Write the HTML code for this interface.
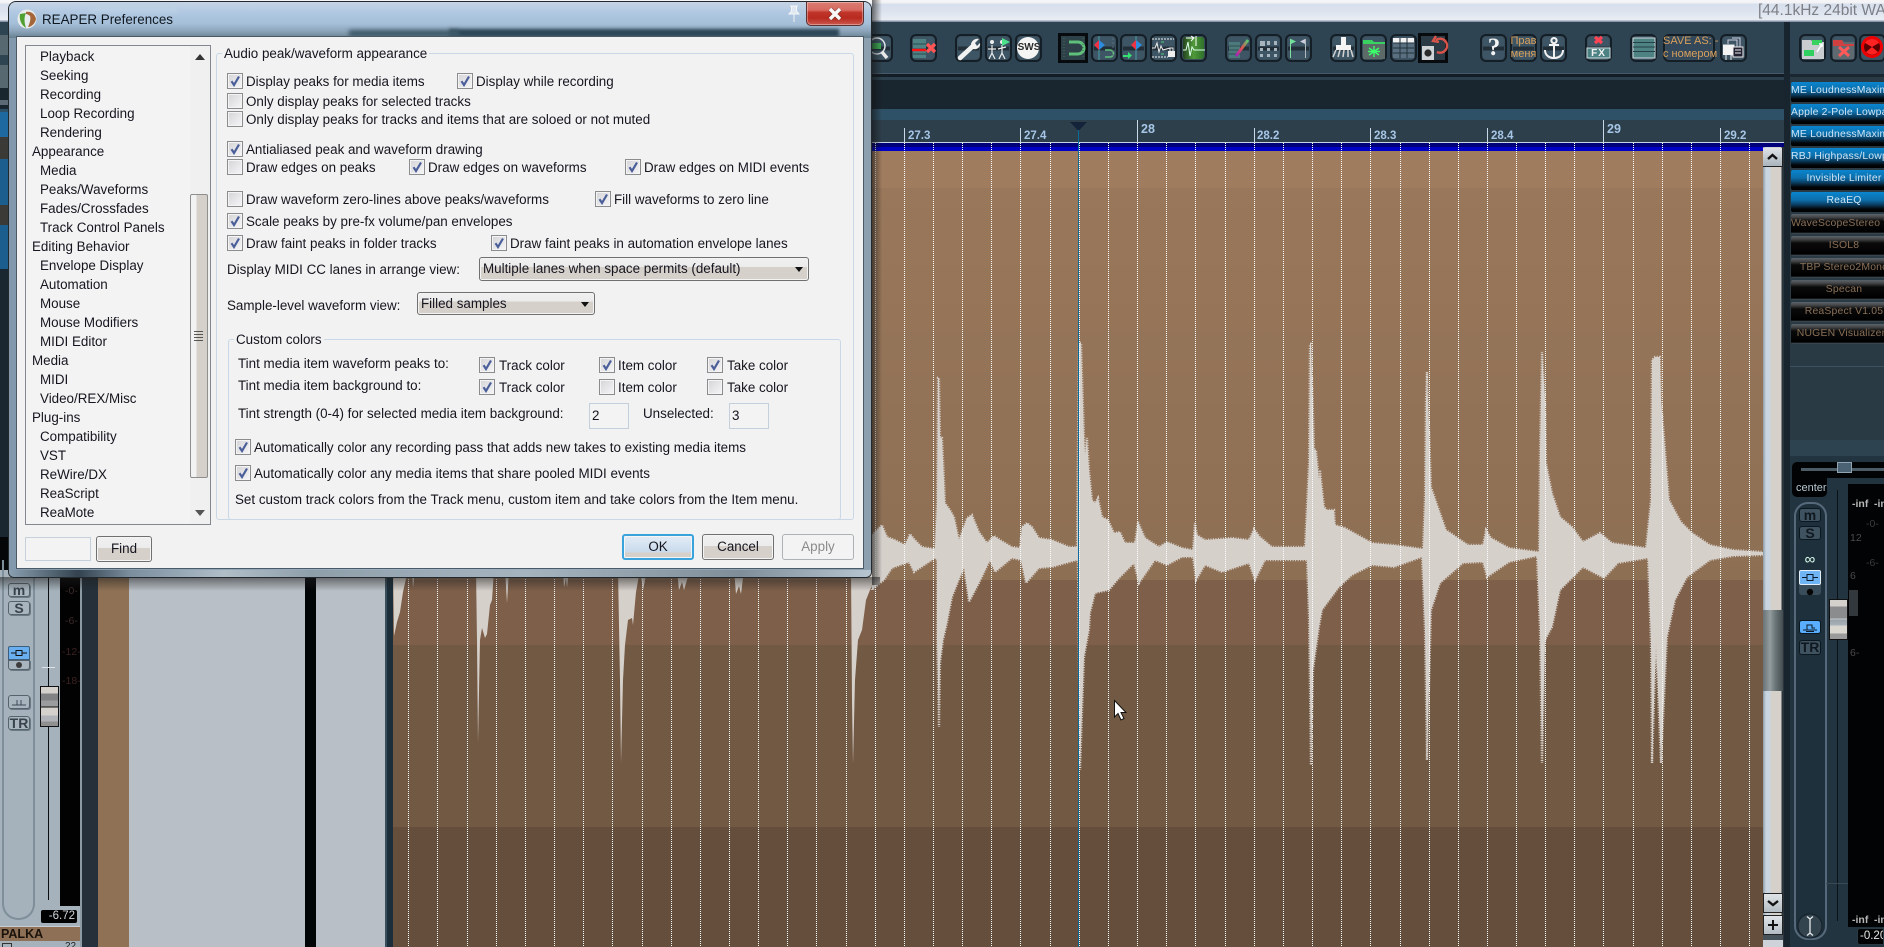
<!DOCTYPE html>
<html><head><meta charset="utf-8"><title>REAPER Preferences</title>
<style>
html,body{margin:0;padding:0;width:1884px;height:947px;overflow:hidden;background:#1a2731}
*{box-sizing:border-box}
body{position:relative;font-family:"Liberation Sans","Noto Sans CJK JP",sans-serif;font-size:13.4px;color:#15151f}
.a{position:absolute}
.t{position:absolute;white-space:nowrap;line-height:16px;height:16px;margin-top:1px}
.cb{position:absolute;width:16px;height:16px;border:1px solid #8a8c8e;background:linear-gradient(135deg,#d4d4d6,#f6f6f8);box-shadow:inset 0 0 0 1px #f4f4f4}
.cb svg{position:absolute;left:1px;top:1px;width:12px;height:12px}
.btn{position:absolute;border:1px solid #707070;border-radius:3px;background:linear-gradient(#f0f0f0 0,#ececec 45%,#d6d0cb 45%,#d6d0cb 100%);text-align:center;line-height:24px;box-shadow:inset 0 0 0 1px #f5f5f5}
.combo{position:absolute;border:1px solid #707070;border-radius:3px;background:linear-gradient(#f0f0f0 0,#ececec 40%,#d6d0cb 40%,#d6d0cb 100%);line-height:22px;padding-left:3px;box-shadow:inset 0 0 0 1px #f3f3f3}
.combo i{position:absolute;right:5px;top:9px;width:0;height:0;border:4.5px solid transparent;border-top:5px solid #111;border-bottom:0}
.inp{position:absolute;border:1px solid #c4d0dc;background:#f3f3f3;line-height:23px;padding-left:2px}
.grp{position:absolute;border:1px solid #c9d7e6;border-radius:3px}
.lbl{position:absolute;background:#f2f2f2;padding:0 2px;line-height:16px;white-space:nowrap;margin-top:1px}
.b{position:absolute;top:34px;height:28px;border-radius:6px;border:2px solid #141e26;background:linear-gradient(#3e5565 0,#3e5565 44%,#232f38 44%,#232f38 60%,#3e5565 60%,#3e5565 100%);box-shadow:0 0 0 1px #3a4d5a inset}
.fx{position:absolute;left:1791px;width:106px;height:20px;text-align:center;font-size:10.4px;line-height:19px;letter-spacing:.2px;white-space:nowrap;border-radius:2px 0 0 2px}
.bl{background:linear-gradient(#0a85cf 0,#0c6eaa 40%,#0a3a5c 65%,#020608 85%,#000 100%);color:#cfe4f4}
.dk{background:linear-gradient(#5c6469 0,#46484a 15%,#0a0a0a 35%,#000 90%,#4c5a64 100%);color:#8a7058}
.m{position:absolute;font-size:10.5px;color:#4c4c4c;white-space:nowrap;line-height:12px}
.sb{position:absolute;border:1px solid #55636d;border-radius:3px;background:#a8b5be;box-shadow:1px 1px 0 #6a7983;text-align:center;font-weight:bold;line-height:12px;font-size:14px;color:#38424a}
.rb{position:absolute;border:1px solid #0c1820;border-radius:3px;background:#3a4d5a;text-align:center;font-weight:bold;line-height:13px;font-size:14px;color:#10181f}
.rl{position:absolute;font-size:11.5px;font-weight:bold;color:#a6c6e6;white-space:nowrap;line-height:14px}
</style></head><body>
<svg width="0" height="0" style="position:absolute"><defs><symbol id="c" viewBox="0 0 12 12"><path d="M2.5 6.2 L5 10 L10 1.5" fill="none" stroke="#4a5f9a" stroke-width="2.2"/></symbol></defs></svg>

<!-- main window top strip -->
<div class="a" style="left:0;top:0;width:1884px;height:22px;background:linear-gradient(#f6f6f9 0,#f2f2f6 3px,#d6dfec 4px,#dde4ef 12px,#e9edf4 20px,#8b97ab 21px)"></div>
<div class="t" style="left:1758px;top:1px;font-size:15.5px;line-height:18px;height:18px;color:#7d7f86">[44.1kHz 24bit WAV</div>

<!-- toolbar -->
<div class="a" style="left:0;top:22px;width:1884px;height:52px;background:#2f4452"></div>
<div class="a" style="left:0;top:73px;width:1785px;height:1px;background:#46596a"></div>
<div class="a" style="left:0;top:74px;width:1785px;height:3px;background:#141d25"></div>
<div class="a" style="left:0;top:77px;width:1785px;height:3px;background:#2b3f4c"></div>
<div class="a" style="left:0;top:80px;width:1785px;height:29px;background:#19252f"></div>
<div class="a" style="left:0;top:109px;width:1785px;height:11px;background:#2f5167"></div>
<div class="a" style="left:0;top:120px;width:1785px;height:22px;background:#2e3f4c"></div>
<div class="a" style="left:0;top:142px;width:1785px;height:1px;background:#c8d4e0"></div>
<div class="a" style="left:0;top:143px;width:1785px;height:4px;background:#00007a"></div>
<div class="a" style="left:0;top:147px;width:1785px;height:4px;background:#0000c4"></div>

<!-- arrange -->
<div class="a" style="left:393px;top:151px;width:1370px;height:37px;background:#a07c5f"></div>
<div class="a" style="left:393px;top:188px;width:1370px;height:392px;background:linear-gradient(#99775a,#8d6f54)"></div>
<div class="a" style="left:393px;top:580px;width:1370px;height:65px;background:#7e604a"></div>
<div class="a" style="left:393px;top:645px;width:1370px;height:182px;background:#725943"></div>
<div class="a" style="left:393px;top:827px;width:1370px;height:120px;background:#664e3c"></div>

<svg class="a" style="left:0;top:0" width="1884" height="947" viewBox="0 0 1884 947">
<path fill="#d6d0cb" stroke="#d6d0cb" stroke-width="2.4" stroke-dasharray="1 1.5" d="M872 535 882 525 887 537 895 540 905 545 910 534 915 540 922 547 935 549 937 503 938 378 939 378 940 437 942 438 944 480 945 503 950 510 954 517 959 540 967 518 972 515 979 532 987 543 994 536 1000 540 1012 547 1020 548 1022 527 1027 523 1032 527 1039 538 1052 540 1069 547 1077 547 1079 343 1081 343 1084 437 1085 455 1087 438 1089 470 1092 500 1095 503 1098 498 1102 517 1108 520 1114 533 1120 532 1125 543 1135 543 1138 522 1145 538 1159 547 1167 542 1182 548 1193 550 1195 523 1197 535 1205 540 1232 538 1249 540 1254 529 1260 537 1272 547 1305 547 1309 463 1310 344 1311 344 1314 450 1316 450 1319 480 1320 470 1324 507 1327 510 1334 510 1335 525 1345 528 1372 543 1394 545 1423 549 1425 497 1426 400 1427 372 1431 487 1440 513 1446 530 1468 545 1483 545 1486 530 1491 538 1509 548 1539 552 1540 450 1542 352 1545 400 1546 463 1552 493 1560 517 1572 527 1583 542 1600 533 1612 543 1646 548 1651 500 1652 360 1655 357 1660 357 1661 400 1669 500 1681 522 1692 533 1710 545 1733 550 1763 552 1763 555 1733 556 1710 560 1687 577 1675 600 1667 637 1661 763 1656 643 1652 763 1651 643 1648 558 1618 563 1604 578 1583 567 1560 590 1552 627 1545 640 1542 763 1540 630 1537 556 1509 562 1487 577 1483 562 1463 563 1440 583 1431 610 1427 760 1425 630 1422 557 1394 567 1372 565 1352 575 1339 587 1322 610 1319 627 1313 670 1311 765 1309 617 1307 560 1282 560 1265 560 1255 580 1249 563 1222 572 1205 565 1196 580 1193 557 1182 557 1167 565 1155 560 1139 583 1134 563 1119 578 1109 590 1095 593 1090 613 1089 630 1084 657 1080 770 1078 563 1077 560 1052 567 1039 568 1026 583 1021 560 1012 558 995 572 990 560 979 583 969 602 964 567 952 597 947 623 943 640 940 663 939 727 937 640 937 560 935 558 914 572 909 562 892 568 884 580 872 590Z"/>
<path fill="#d6d0cb" d="M393 570 394 636 397 622 400 612 403 592 408 570ZM412 570 413 587 415 570ZM476 570 477 640 478 743 480 640 482 628 485 638 487 634 490 605 492 600 494 570ZM505 570 507 603 509 570ZM563 570 564 587 566 578 567 587 569 570ZM618 570 620 680 621 763 623 680 625 645 628 620 632 618 633 625 636 592 640 570 643 590 647 570ZM677 570 679 590 682 582 684 590 690 570ZM734 570 736 594 739 586 741 594 744 570ZM851 570 852 700 853 764 855 680 858 640 862 630 866 600 870 590 878 570Z"/>
<path fill="none" stroke="#fff" stroke-dasharray="1 1" stroke-width="1" d="M408.5 143V947M437.5 143V947M467.5 143V947M496.5 143V947M525.5 143V947M554.5 143V947M583.5 143V947M612.5 143V947M642.5 143V947M671.5 143V947M700.5 143V947M729.5 143V947M758.5 143V947M787.5 143V947M816.5 143V947M846.5 143V947M875.5 143V947M904.5 143V947M933.5 143V947M962.5 143V947M991.5 143V947M1020.5 143V947M1050.5 143V947M1079.5 143V947M1108.5 143V947M1137.5 143V947M1166.5 143V947M1195.5 143V947M1225.5 143V947M1254.5 143V947M1283.5 143V947M1312.5 143V947M1341.5 143V947M1370.5 143V947M1400.5 143V947M1429.5 143V947M1458.5 143V947M1487.5 143V947M1516.5 143V947M1545.5 143V947M1574.5 143V947M1603.5 143V947M1633.5 143V947M1662.5 143V947M1691.5 143V947M1720.5 143V947M1749.5 143V947"/>
<path fill="none" stroke="#c8d8e8" d="M904.5 128V143M1020.5 128V143M1137.5 120V143M1254.5 128V143M1370.5 128V143M1487.5 128V143M1603.5 120V143M1720.5 128V143"/>
<path d="M1070 122H1087L1078.5 131Z" fill="#14223a"/>
<path d="M1078.5 130V947" stroke="#0a6a9a" stroke-width="1" fill="none"/>
<path d="M1114.5 700.5V717L1118 713.5 1121 720 1124 718.5 1121 712.5H1126Z" fill="#fff" stroke="#111" stroke-width="1"/>
</svg>

<div class="rl" style="left:908px;top:129px">27.3</div>
<div class="rl" style="left:1024px;top:129px">27.4</div>
<div class="rl" style="left:1141px;top:122px;font-size:12.5px">28</div>
<div class="rl" style="left:1257px;top:129px">28.2</div>
<div class="rl" style="left:1374px;top:129px">28.3</div>
<div class="rl" style="left:1491px;top:129px">28.4</div>
<div class="rl" style="left:1607px;top:122px;font-size:12.5px">29</div>
<div class="rl" style="left:1724px;top:129px">29.2</div>

<!-- toolbar buttons -->
<div class="b" style="left:868px;width:25px"></div>
<div class="b" style="left:910px;width:27px"></div>
<div class="b" style="left:955px;width:27px"></div>
<div class="b" style="left:985px;width:27px"></div>
<div class="b" style="left:1015px;width:27px"></div>
<div class="a" style="left:1058px;top:33px;width:30px;height:30px;border:3px solid #070b0e;background:#2f4148"></div>
<div class="b" style="left:1091px;width:27px"></div>
<div class="b" style="left:1120px;width:27px"></div>
<div class="b" style="left:1150px;width:27px"></div>
<div class="b" style="left:1180px;width:27px;background:linear-gradient(90deg,#1f3a1c,#4f9a3a 50%,#2d6d28)"></div>
<div class="b" style="left:1225px;width:27px"></div>
<div class="b" style="left:1255px;width:27px"></div>
<div class="b" style="left:1285px;width:27px"></div>
<div class="b" style="left:1330px;width:27px"></div>
<div class="b" style="left:1360px;width:27px"></div>
<div class="b" style="left:1390px;width:27px"></div>
<div class="a" style="left:1418px;top:33px;width:30px;height:30px;border:3px solid #070b0e;background:#2b3a44"></div>
<div class="b" style="left:1480px;width:27px"></div>
<div class="b" style="left:1510px;width:27px"></div>
<div class="b" style="left:1540px;width:27px"></div>
<div class="b" style="left:1585px;width:27px"></div>
<div class="b" style="left:1630px;width:27px"></div>
<div class="b" style="left:1663px;width:52px;background:#33485a"></div>
<div class="b" style="left:1720px;width:27px"></div>
<div class="b" style="left:1799px;width:27px"></div>
<div class="b" style="left:1830px;width:27px"></div>
<div class="b" style="left:1859px;width:27px"></div>

<svg class="a" style="left:0;top:0" width="1884" height="80" viewBox="0 0 1884 80" fill="none">
<rect x="872" y="43" width="9" height="6" fill="#3fae55"/><circle cx="877" cy="46" r="8" stroke="#dfe6ea" stroke-width="1.5"/><path d="M882 52 887 58" stroke="#e8e8e8" stroke-width="3.5"/>
<rect x="913" y="39" width="13" height="19" fill="#4e8283"/><path d="M913 44H926M913 49H926M913 54H926" stroke="#2a4a52"/><path d="M912 50H926" stroke="#f11" stroke-width="2.4"/><path d="M927 44 935 52M935 44 927 52" stroke="#f55" stroke-width="3.4"/>
<path d="M960 58 973 46" stroke="#f2f2f2" stroke-width="4.6" stroke-linecap="round"/><path d="M971 44C972 40 976 38 979 39L975 43 977 46 980 43C981 47 977 50 973 49Z" fill="#f2f2f2"/>
<path d="M992 45V53L989 59M992 53 995 59M988 49H996M1002 45V53L999 59M1002 53 1005 59M998 49 1006 47" stroke="#eee" stroke-width="1.2"/><circle cx="992" cy="42" r="2" fill="#eee"/><circle cx="1002" cy="42" r="2" fill="#eee"/><path d="M1002 38V46L1010 42Z" fill="#4fe08a"/>
<circle cx="1028" cy="48" r="11" fill="#f4f4f4"/>
<path d="M1078 42H1069M1078 54H1069M1078 42A6 6 0 0 1 1078 54" stroke="#5ec07a" stroke-width="3"/><path d="M1064 38V58M1083 38V58" stroke="#4a6a5a" stroke-dasharray="1 2"/>
<path d="M1099 36V60" stroke="#49a0a8"/><path d="M1099 40 1094 45 1099 50Z" fill="#e34"/><path d="M1099 40 1105 45 1099 50Z" fill="#2c8de0"/><path d="M1105 50H1110A3.5 3.5 0 0 1 1110 57H1105" stroke="#5ec07a" stroke-width="1.6"/><path d="M1113 38V58" stroke="#5a6e7a" stroke-dasharray="2 2"/>
<path d="M1136 36V60" stroke="#49a0a8"/><path d="M1136 40 1131 45 1136 50Z" fill="#e34"/><path d="M1136 40 1142 45 1136 50Z" fill="#2c8de0"/><path d="M1123 55H1128V52L1132 55.5 1128 59V57H1123Z" fill="#35e070"/>
<path d="M1152 39H1174M1152 57H1168" stroke="#eee" stroke-dasharray="2 1"/><path d="M1152 48H1155L1157 43 1159 52 1161 46 1163 50 1170 48" stroke="#eee"/><rect x="1168" y="51" width="7" height="6" fill="#eee"/><path d="M1170 51V48H1173V51" stroke="#eee"/><path d="M1161 42H1164M1161 54H1164" stroke="#4fd07a"/>
<path d="M1183 50H1186L1188 42 1190 56 1192 47 1194 50 1205 50" stroke="#dfe" stroke-width="1"/><path d="M1186 38H1194M1191 36 1194 38 1191 41M1196 36V46" stroke="#fff"/>
<rect x="1229" y="42" width="11" height="16" fill="#4c7a7a"/><path d="M1229 46H1240M1229 50H1240M1229 54H1240" stroke="#2f4f55"/><path d="M1236 56 1248 40" stroke="url(#rb)" stroke-width="3"/>
<defs><linearGradient id="rb" x1="0" y1="1" x2="1" y2="0"><stop offset="0" stop-color="#a020c0"/><stop offset=".5" stop-color="#e05050"/><stop offset="1" stop-color="#50d070"/></linearGradient></defs>
<path d="M1260 41h5v5h-5zM1267 41h3v4h-3zM1274 41h3v4h-3zM1260 48h3v3h-3zM1267 48h3v3h-3zM1274 48h3v3h-3zM1260 54h3v3h-3zM1267 54h3v3h-3zM1274 54h3v3h-3z" fill="#a8b4bc"/>
<path d="M1290.5 39V58" stroke="#7ee0a0"/><path d="M1291 39 1296 41.5 1291 44Z" fill="#6fe098"/><path d="M1305.5 39V58" stroke="#b0b8bc"/><path d="M1305 39 1300 41.5 1305 44Z" fill="#ccd"/>
<rect x="1341" y="37" width="5" height="8" fill="#f4f4f4"/><rect x="1336" y="45" width="15" height="5" fill="#f4f4f4"/><path d="M1336 50 1333 57M1340 50 1338 57M1344 50 1343 57M1348 50 1348 57M1351 50 1353 57" stroke="#d4d4d4" stroke-width="1.5"/>
<path d="M1363 40H1372L1374 42H1385V45H1363Z" fill="#39d15f"/><rect x="1363" y="44" width="22" height="15" fill="#5c6a68"/><path d="M1374 46V57M1369 48 1379 55M1379 48 1369 55M1368 51.5H1380" stroke="#3bff6a" stroke-width="1.4"/>
<rect x="1393" y="38" width="21" height="20" fill="#5a7080"/><path d="M1393 38h21v5h-21z" fill="#f2f2f2"/><path d="M1400 38V58M1407 38V58M1393 43H1414M1393 48H1414M1393 53H1414" stroke="#23323c"/>
<rect x="1422" y="46" width="12" height="14" fill="#cfd3d6"/><circle cx="1428" cy="53" r="3.6" fill="#2a2a2a"/><path d="M1436 40A7 7 0 1 1 1437 52M1436 36 1433 41 1439 42" stroke="#d8544a" stroke-width="2.4"/>
<path d="M1554 38A2.6 2.6 0 1 0 1554.01 38M1554 43V58M1549 45H1559M1545 50C1545 56 1550 58 1554 58 1558 58 1563 56 1563 50" stroke="#f2f2f2" stroke-width="2"/>
<path d="M1595 37 1602 43M1602 37 1595 43" stroke="#f45" stroke-width="3.2"/><rect x="1587" y="48" width="23" height="10" fill="#4d8284" stroke="#cfdfe0"/>
<rect x="1633" y="38" width="22" height="20" fill="#4e8283" stroke="#cfd8dc"/><path d="M1633 42.5H1655M1633 47H1655M1633 51.5H1655" stroke="#23404a"/>
<path d="M1723 45H1734V55H1731V60M1726 55V60" stroke="#eee"/><rect x="1723" y="45" width="11" height="10" fill="#f4f4f4"/><path d="M1728 44V40H1737V55M1732 38H1740V53" stroke="#ccd"/><rect x="1733" y="47" width="10" height="10" fill="#223" stroke="#eee"/><path d="M1735 50H1741M1735 53H1741" stroke="#eee"/>
<path d="M1802 40H1811L1813 42H1824V59H1802Z" fill="#c9cdd0"/><path d="M1812 40H1822V45H1812Z" fill="#39d15f"/><rect x="1804" y="50" width="10" height="6" fill="#2fd060"/><path d="M1817 52 1822 44M1819 44H1822V47" stroke="#fff" stroke-width="1.4"/>
<path d="M1833 40H1842L1844 42H1854V59H1833Z" fill="#5f6a70"/><path d="M1833 40H1842L1844 44H1854V46H1833Z" fill="#d04040"/><path d="M1839 47 1849 56M1849 47 1839 56" stroke="#ff5a5a" stroke-width="3"/>
<circle cx="1872" cy="47" r="11" fill="#e00"/><circle cx="1872" cy="47" r="8" fill="#5a0000"/><path d="M1872 47 1872 39A8 8 0 0 1 1879 43ZM1872 47 1865 43A8 8 0 0 1 1872 39Z" fill="#f22"/><path d="M1872 47 1878 52A8 8 0 0 1 1866 52Z" fill="#f22"/>
</svg>
<div class="a" style="left:1016px;top:42px;width:26px;text-align:center;font-size:10px;font-weight:bold;color:#2a2a2a;line-height:12px">SWS</div>
<div class="a" style="left:1482px;top:33px;width:24px;text-align:center;font-family:'Liberation Serif',serif;font-size:25px;font-weight:bold;color:#f4f4f4;line-height:30px">?</div>
<div class="a" style="left:1510px;top:35px;width:27px;text-align:center;font-size:11px;color:#d8a05c;line-height:13px">Прав<br>меня</div>
<div class="a" style="left:1587px;top:48px;width:23px;text-align:center;font-size:10px;font-weight:bold;letter-spacing:1px;color:#f2f2f2;line-height:11px">FX</div>
<div class="a" style="left:1663px;top:35px;width:52px;text-align:center;font-size:11px;color:#d8a05c;line-height:13px;white-space:nowrap">SAVE AS: -<br>с номером</div>

<!-- far left edge behind dialog -->
<div class="a" style="left:0;top:35px;width:8px;height:20px;background:#586871"></div>
<div class="a" style="left:0;top:65px;width:8px;height:23px;background:#586871"></div>
<div class="a" style="left:0;top:100px;width:8px;height:5px;background:#5b6a74"></div>
<div class="a" style="left:0;top:112px;width:8px;height:25px;background:#1e6aa0"></div>
<div class="a" style="left:0;top:137px;width:8px;height:22px;background:#3c3a36"></div>
<div class="a" style="left:0;top:159px;width:8px;height:46px;background:#1c5e8e"></div>
<div class="a" style="left:0;top:205px;width:8px;height:20px;background:#3c3a36"></div>
<div class="a" style="left:0;top:225px;width:8px;height:44px;background:#1c5e8e"></div>
<div class="a" style="left:0;top:537px;width:8px;height:34px;background:#050607"></div>

<!-- scrollbar right -->
<div class="a" style="left:1763px;top:147px;width:21px;height:800px;background:linear-gradient(90deg,#8d9ba7 0,#c9d6e2 3px,#c9d6e2 7px,#d6d0cb 8px,#d6d0cb 18px,#2a343c 19px)"></div>
<div class="a" style="left:1763px;top:148px;width:20px;height:19px;background:linear-gradient(#dfe3e7,#aab4bc);border-bottom:1px solid #222;border-right:1px solid #222"><svg width="19" height="18"><path d="M5 11 9.5 7 14 11" fill="none" stroke="#111" stroke-width="2.4"/></svg></div>
<div class="a" style="left:1763px;top:610px;width:20px;height:81px;background:linear-gradient(90deg,#697477,#939c9f 35%,#6d787b 60%,#434d50)"></div>
<div class="a" style="left:1763px;top:893px;width:20px;height:20px;background:linear-gradient(#dfe3e7,#b4bdc4);border:1px solid #222"><svg width="18" height="18"><path d="M4 7 9 11 14 7" fill="none" stroke="#111" stroke-width="2.4"/></svg></div>
<div class="a" style="left:1763px;top:915px;width:20px;height:20px;background:linear-gradient(#dfe3e7,#b4bdc4);border:1px solid #222"><svg width="18" height="18"><path d="M9 4V14M4 9H14" stroke="#111" stroke-width="2"/></svg></div>
<div class="a" style="left:1763px;top:935px;width:20px;height:5px;background:#46525a"></div>
<div class="a" style="left:1763px;top:940px;width:20px;height:7px;background:#cdd3d8"></div>

<!-- right panel -->
<div class="a" style="left:1784px;top:22px;width:6px;height:925px;background:#18242e"></div>
<div class="a" style="left:1790px;top:77px;width:94px;height:870px;background:#2a3a45"></div>
<div class="fx bl" style="top:82px;line-height:17px">ME LoudnessMaximizer</div>
<div class="fx bl" style="top:104px;text-align:left;line-height:17px">Apple 2-Pole Lowpass Filter</div>
<div class="fx bl" style="top:126px;line-height:17px">ME LoudnessMaximizer</div>
<div class="fx bl" style="top:148px;text-align:left;line-height:17px">RBJ Highpass/Lowpass Filter</div>
<div class="fx bl" style="top:170px;line-height:17px">Invisible Limiter</div>
<div class="fx bl" style="top:192px;line-height:17px">ReaEQ</div>
<div class="fx dk" style="top:214px">WaveScopeStereo V1.0</div>
<div class="fx dk" style="top:236px">ISOL8</div>
<div class="fx dk" style="top:258px">TBP Stereo2Mono</div>
<div class="fx dk" style="top:280px">Specan</div>
<div class="fx dk" style="top:302px">ReaSpect V1.05</div>
<div class="fx dk" style="top:324px">NUGEN Visualizer2</div>
<div class="a" style="left:1790px;top:366px;width:94px;height:1px;background:#3c5060"></div>
<div class="a" style="left:1790px;top:440px;width:94px;height:22px;background:#2e4350"></div>
<div class="a" style="left:1790px;top:456px;width:94px;height:491px;background:#22343f"></div>
<div class="a" style="left:1792px;top:462px;width:92px;height:16px;background:#020304;border-radius:5px 0 0 0"></div>
<div class="a" style="left:1801px;top:468px;width:83px;height:3px;background:#4c5c66"></div>
<div class="a" style="left:1837px;top:462px;width:15px;height:11px;background:#4a6274;border:1px solid #8fa3b2"></div>
<div class="a" style="left:1792px;top:478px;width:35px;height:19px;background:#020304;border-radius:0 0 5px 5px"></div>
<div class="t" style="left:1796px;top:479px;font-size:11px;color:#b8c8d2">center</div>
<div class="a" style="left:1794px;top:502px;width:33px;height:438px;border:2px solid #55697a;border-radius:14px;background:#1e303c"></div>
<div class="rb" style="left:1799px;top:508px;width:22px;height:14px;background:#3f5260">m</div>
<div class="rb" style="left:1799px;top:526px;width:22px;height:14px;background:#3f5260">S</div>
<div class="a" style="left:1799px;top:552px;width:22px;text-align:center;font-size:15px;color:#dfe;line-height:16px">∞</div>
<div class="a" style="left:1799px;top:570px;width:22px;height:15px;background:#6fb4f4;border:1px solid #e4eef8;border-radius:2px"><svg width="20" height="13"><path d="M2 6.5H7M13 6.5H18M7 3.5H13V9.5H7Z" fill="none" stroke="#0a1a2a"/></svg></div>
<div class="a" style="left:1799px;top:585px;width:22px;height:10px;background:#3a4d5a;border-radius:0 0 3px 3px"><svg width="22" height="10"><circle cx="11" cy="5" r="3.2" fill="#050505"/></svg></div>
<div class="a" style="left:1799px;top:620px;width:22px;height:14px;background:#5aaeff;border:1px solid #0c1820;border-radius:3px"><svg width="20" height="12"><path d="M3 9H17M7 9V4H12V7H15M6 10.500H14" fill="none" stroke="#0a1a2a"/></svg></div>
<div class="rb" style="left:1799px;top:640px;width:22px;height:15px;background:#3f5260">TR</div>
<div class="a" style="left:1837px;top:490px;width:1px;height:431px;background:#0a1218"></div>
<div class="a" style="left:1848px;top:484px;width:36px;height:443px;background:#020304"></div>
<div class="a" style="left:1829px;top:599px;width:19px;height:41px;border:1px solid #111;background:linear-gradient(#d4d0cc 0,#d4d0cc 6px,#8a8c8e 7px,#8a8c8e 18px,#c8ccd0 19px,#98a2a8 20px,#a8b2b8 25px,#dad6d0 26px,#dad6d0 33px,#9a9a9a 34px)"></div>
<div class="a" style="left:1849px;top:590px;width:9px;height:26px;background:#33383c"></div>
<div class="m" style="left:1852px;top:498px;color:#b8b8b8;font-weight:bold;font-size:10.5px">-inf</div>
<div class="m" style="left:1874px;top:498px;color:#b8b8b8;font-weight:bold;font-size:10.5px">-inf</div>
<div class="m" style="left:1866px;top:518px;color:#3c3c3c">-0-</div>
<div class="m" style="left:1850px;top:532px;color:#4a4a4a">12</div>
<div class="m" style="left:1866px;top:557px;color:#3c3c3c">-6-</div>
<div class="m" style="left:1850px;top:570px;color:#4a4a4a">6</div>
<div class="m" style="left:1850px;top:647px;color:#4a4a4a">6-</div>
<div class="a" style="left:1826px;top:883px;width:22px;height:1px;background:#3a4a55"></div>
<div class="m" style="left:1852px;top:914px;color:#b8b8b8;font-weight:bold;font-size:10.5px;z-index:1">-inf</div>
<div class="m" style="left:1874px;top:914px;color:#b8b8b8;font-weight:bold;font-size:10.5px;z-index:1">-inf</div>
<div class="a" style="left:1857px;top:928px;width:27px;height:17px;background:#020304;border-radius:3px 0 0 3px;border:1px solid #2a3a44;color:#e6e6e6;font-size:11.5px;line-height:15px;padding-left:2px;white-space:nowrap;overflow:hidden">-0.20dB</div>
<svg class="a" style="left:1796px;top:912px" width="30" height="30"><circle cx="14" cy="14" r="12" fill="#33444f" stroke="#14202a"/><path d="M14 7V21M11 4.500 14 7 17 4.500M11 23.500 14 21 17 23.500" stroke="#e4e8ea" stroke-width="1.3" fill="none"/></svg>

<!-- left bottom track panel -->
<div class="a" style="left:0;top:570px;width:80px;height:377px;background:#a5b2bb"></div>
<div class="a" style="left:2px;top:560px;width:33px;height:360px;border:2px solid #7f8f9a;border-top:0;border-radius:0 0 16px 16px"></div>
<div class="sb" style="left:8px;top:583px;width:22px;height:14px">m</div>
<div class="sb" style="left:8px;top:601px;width:22px;height:14px">S</div>
<div class="a" style="left:8px;top:646px;width:22px;height:14px;background:#69aeee;border:1px solid #3d5e7a;border-radius:2px 2px 0 0"><svg width="20" height="12"><path d="M2 6H7M13 6H18M7 3.500H13V8.500H7Z" fill="none" stroke="#111"/></svg></div>
<div class="sb" style="left:8px;top:660px;width:22px;height:10px;border-radius:0 0 3px 3px"><svg width="20" height="8" style="display:block"><circle cx="10" cy="4" r="3" fill="#3c3c3c"/></svg></div>
<div class="sb" style="left:8px;top:695px;width:22px;height:14px"><svg width="20" height="12" style="display:block"><path d="M3 9H17M8 9V4M12 9V4" stroke="#3a4a55" fill="none"/></svg></div>
<div class="sb" style="left:8px;top:716px;width:22px;height:14px">TR</div>
<div class="a" style="left:48px;top:577px;width:1px;height:323px;background:#0a0e10"></div>
<div class="a" style="left:42px;top:667px;width:13px;height:1px;background:#dfe3e6"></div>
<div class="a" style="left:40px;top:686px;width:19px;height:41px;border:1px solid #111;background:linear-gradient(#d4d0cc 0,#d4d0cc 6px,#808284 7px,#808284 13px,#9a9c9e 14px,#9a9c9e 19px,#111 20px,#d4d0cc 21px,#d4d0cc 28px,#b0b4b8 29px,#b0b4b8 34px,#909090 35px)"></div>
<div class="a" style="left:60px;top:570px;width:20px;height:336px;background:#020202"></div>
<div class="m" style="left:65px;top:585px;color:#3c2a2a">-0-</div>
<div class="m" style="left:65px;top:615px;color:#3c2a2a">-6-</div>
<div class="m" style="left:62px;top:646px;color:#3c2222">-12-</div>
<div class="m" style="left:62px;top:675px;color:#3c2222">-18-</div>
<div class="a" style="left:41px;top:910px;width:36px;height:13px;background:#020202;border-radius:2px;color:#cfd6dc;font-size:11.5px;line-height:13px;text-align:right;padding-right:2px">-6.72</div>
<div class="a" style="left:0;top:926px;width:80px;height:1px;background:#c8ced4"></div>
<div class="a" style="left:0;top:927px;width:80px;height:14px;background:#8d7055;font-size:12.5px;font-weight:bold;line-height:15px;color:#1c120c;padding-left:1px">PALKA</div>
<div class="a" style="left:2px;top:943px;width:10px;height:6px;border:1px solid #333"></div>
<div class="m" style="left:65px;top:941px;font-size:10px;color:#222">22</div>
<div class="a" style="left:80px;top:570px;width:2px;height:377px;background:#8d9ba5"></div>
<div class="a" style="left:82px;top:570px;width:16px;height:377px;background:#25303a"></div>
<div class="a" style="left:98px;top:570px;width:31px;height:377px;background:#8f7255"></div>
<div class="a" style="left:129px;top:570px;width:176px;height:377px;background:#b8bfc6"></div>
<div class="a" style="left:305px;top:570px;width:11px;height:377px;background:#020506"></div>
<div class="a" style="left:316px;top:570px;width:69px;height:377px;background:#b8bfc6"></div>
<div class="a" style="left:385px;top:570px;width:8px;height:377px;background:#1b2e3a;box-shadow:inset 2px 0 0 #3a4f5c"></div>
<!-- shadow below dialog, above waveform/panels -->
<div class="a" style="left:0;top:577px;width:880px;height:14px;background:linear-gradient(rgba(30,30,30,.55),rgba(30,30,30,0))"></div>
<div class="a" style="left:872px;top:0;width:10px;height:585px;background:linear-gradient(90deg,rgba(20,20,20,.6),rgba(20,20,20,0))"></div>

<!-- DIALOG -->
<div class="a" style="left:8px;top:1px;width:864px;height:577px;border:1px solid #23282c;border-radius:8px 8px 6px 6px;background:linear-gradient(90deg,#8299ad,#9fb3c4 50%,#8da0b0);overflow:hidden">
  <div class="a" style="left:0;top:0;width:862px;height:36px;background:linear-gradient(#c6d4e4 0,#b0c8e2 30%,#a5bfd9 60%,#8ea6bc 80%,#67808f 100%)"></div>
  <div class="a" style="left:80px;top:3px;width:90px;height:7px;background:#bcd0e4;filter:blur(3px)"></div>
  <div class="a" style="left:440px;top:27px;width:390px;height:8px;background:#2c4656;filter:blur(1.5px)"></div>
  <div class="a" style="left:340px;top:28px;width:110px;height:7px;background:#3f5a6a;filter:blur(2px)"></div>
  <div class="a" style="left:0;top:568px;width:862px;height:8px;background:linear-gradient(90deg,#8aa0b0,#33424e 8%,#7a8e9e 14%,#b0bec8 25%,#8f9faa 35%,#a6b4c0 60%,#7f8e98 85%,#b6c5d0)"></div>
</div>
<svg class="a" style="left:17px;top:9px" width="20" height="20" viewBox="0 0 20 20"><circle cx="10" cy="10" r="9.5" fill="#e8ecec"/><path d="M3 5C2 10 4 16 9 19 7 13 7 8 9 4Z" fill="#4fa030"/><path d="M9 3C14 2 18 5 19 10 18 15 14 18 11 18 13 14 14 9 13 7 12 6 10 5 9 5Z" fill="#a5663a"/></svg>
<div class="t" style="left:42px;top:10px;font-size:13.4px;line-height:18px;height:18px;color:#10181f">REAPER Preferences</div>
<svg class="a" style="left:786px;top:5px" width="16" height="18" viewBox="0 0 16 18"><path d="M4 1H12M5.500 1V6L3 9H13L10.500 6V1M8 9V17" fill="#dfe8f0" stroke="#f8f8f8" stroke-opacity=".9"/></svg>
<div class="a" style="left:806px;top:2px;width:58px;height:24px;border:1px solid #5a3030;border-top:0;border-radius:0 0 5px 5px;background:linear-gradient(#d97c72 0,#d86a60 35%,#c0352a 45%,#b82a20 70%,#cc5a50 100%);box-shadow:inset 0 0 0 1px rgba(255,255,255,.35)"><svg width="56" height="22"><path d="M23 7 33 17M33 7 23 17" stroke="#222" stroke-width="5" stroke-opacity=".35"/><path d="M23 7 33 17M33 7 23 17" stroke="#f8f8f8" stroke-width="3.4"/></svg></div>

<!-- client area -->
<div class="a" style="left:16px;top:36px;width:848px;height:533px;background:#f2f2f2;border:1px solid #4a5a66"></div>

<!-- list box -->
<div class="a" style="left:25px;top:45px;width:186px;height:480px;border:1px solid #828790;background:#f3f3f3"></div>
<div class="a" style="left:190px;top:46px;width:20px;height:478px;background:#f0f0f0"></div>
<div class="a" style="left:190px;top:194px;width:18px;height:284px;border:1px solid #8e8f8f;background:linear-gradient(90deg,#f2f2f2 0,#f2f2f2 5px,#d6d0cb 6px);border-radius:2px"></div>
<svg class="a" style="left:190px;top:50px" width="20" height="12"><path d="M5 10H15L10 4Z" fill="#333"/></svg>
<svg class="a" style="left:190px;top:505px" width="20" height="12"><path d="M5 5H15L10 11Z" fill="#555"/></svg>
<svg class="a" style="left:193px;top:330px" width="14" height="12"><path d="M1 1.500H10M1 4.500H10M1 7.500H10M1 10.500H10" stroke="#555" fill="none"/></svg>
<div class="t" style="left:40px;top:48px">Playback</div>
<div class="t" style="left:40px;top:67px">Seeking</div>
<div class="t" style="left:40px;top:86px">Recording</div>
<div class="t" style="left:40px;top:105px">Loop Recording</div>
<div class="t" style="left:40px;top:124px">Rendering</div>
<div class="t" style="left:32px;top:143px">Appearance</div>
<div class="t" style="left:40px;top:162px">Media</div>
<div class="t" style="left:40px;top:181px">Peaks/Waveforms</div>
<div class="t" style="left:40px;top:200px">Fades/Crossfades</div>
<div class="t" style="left:40px;top:219px">Track Control Panels</div>
<div class="t" style="left:32px;top:238px">Editing Behavior</div>
<div class="t" style="left:40px;top:257px">Envelope Display</div>
<div class="t" style="left:40px;top:276px">Automation</div>
<div class="t" style="left:40px;top:295px">Mouse</div>
<div class="t" style="left:40px;top:314px">Mouse Modifiers</div>
<div class="t" style="left:40px;top:333px">MIDI Editor</div>
<div class="t" style="left:32px;top:352px">Media</div>
<div class="t" style="left:40px;top:371px">MIDI</div>
<div class="t" style="left:40px;top:390px">Video/REX/Misc</div>
<div class="t" style="left:32px;top:409px">Plug-ins</div>
<div class="t" style="left:40px;top:428px">Compatibility</div>
<div class="t" style="left:40px;top:447px">VST</div>
<div class="t" style="left:40px;top:466px">ReWire/DX</div>
<div class="t" style="left:40px;top:485px">ReaScript</div>
<div class="t" style="left:40px;top:504px">ReaMote</div>

<div class="inp" style="left:25px;top:537px;width:66px;height:24px"></div>
<div class="btn" style="left:96px;top:536px;width:56px;height:26px">Find</div>

<!-- group -->
<div class="grp" style="left:216px;top:53px;width:638px;height:467px"></div>
<div class="lbl" style="left:222px;top:45px">Audio peak/waveform appearance</div>

<div class="cb" style="left:227px;top:73px"><svg><use href="#c"/></svg></div><div class="t" style="left:246px;top:73px">Display peaks for media items</div>
<div class="cb" style="left:457px;top:73px"><svg><use href="#c"/></svg></div><div class="t" style="left:476px;top:73px">Display while recording</div>
<div class="cb" style="left:227px;top:93px"></div><div class="t" style="left:246px;top:93px">Only display peaks for selected tracks</div>
<div class="cb" style="left:227px;top:111px"></div><div class="t" style="left:246px;top:111px">Only display peaks for tracks and items that are soloed or not muted</div>
<div class="cb" style="left:227px;top:141px"><svg><use href="#c"/></svg></div><div class="t" style="left:246px;top:141px">Antialiased peak and waveform drawing</div>
<div class="cb" style="left:227px;top:159px"></div><div class="t" style="left:246px;top:159px">Draw edges on peaks</div>
<div class="cb" style="left:409px;top:159px"><svg><use href="#c"/></svg></div><div class="t" style="left:428px;top:159px">Draw edges on waveforms</div>
<div class="cb" style="left:625px;top:159px"><svg><use href="#c"/></svg></div><div class="t" style="left:644px;top:159px">Draw edges on MIDI events</div>
<div class="cb" style="left:227px;top:191px"></div><div class="t" style="left:246px;top:191px">Draw waveform zero-lines above peaks/waveforms</div>
<div class="cb" style="left:595px;top:191px"><svg><use href="#c"/></svg></div><div class="t" style="left:614px;top:191px">Fill waveforms to zero line</div>
<div class="cb" style="left:227px;top:213px"><svg><use href="#c"/></svg></div><div class="t" style="left:246px;top:213px">Scale peaks by pre-fx volume/pan envelopes</div>
<div class="cb" style="left:227px;top:235px"><svg><use href="#c"/></svg></div><div class="t" style="left:246px;top:235px">Draw faint peaks in folder tracks</div>
<div class="cb" style="left:491px;top:235px"><svg><use href="#c"/></svg></div><div class="t" style="left:510px;top:235px">Draw faint peaks in automation envelope lanes</div>

<div class="t" style="left:227px;top:261px">Display MIDI CC lanes in arrange view:</div>
<div class="combo" style="left:479px;top:257px;width:330px;height:24px">Multiple lanes when space permits (default)<i></i></div>
<div class="t" style="left:227px;top:297px">Sample-level waveform view:</div>
<div class="combo" style="left:417px;top:292px;width:178px;height:23px">Filled samples<i></i></div>

<!-- custom colors -->
<div class="grp" style="left:228px;top:339px;width:613px;height:181px"></div>
<div class="lbl" style="left:234px;top:331px">Custom colors</div>
<div class="t" style="left:238px;top:355px">Tint media item waveform peaks to:</div>
<div class="cb" style="left:479px;top:357px"><svg><use href="#c"/></svg></div><div class="t" style="left:499px;top:357px">Track color</div>
<div class="cb" style="left:599px;top:357px"><svg><use href="#c"/></svg></div><div class="t" style="left:618px;top:357px">Item color</div>
<div class="cb" style="left:707px;top:357px"><svg><use href="#c"/></svg></div><div class="t" style="left:727px;top:357px">Take color</div>
<div class="t" style="left:238px;top:377px">Tint media item background to:</div>
<div class="cb" style="left:479px;top:379px"><svg><use href="#c"/></svg></div><div class="t" style="left:499px;top:379px">Track color</div>
<div class="cb" style="left:599px;top:379px"></div><div class="t" style="left:618px;top:379px">Item color</div>
<div class="cb" style="left:707px;top:379px"></div><div class="t" style="left:727px;top:379px">Take color</div>
<div class="t" style="left:238px;top:405px">Tint strength (0-4) for selected media item background:</div>
<div class="inp" style="left:589px;top:403px;width:40px;height:26px">2</div>
<div class="t" style="left:643px;top:405px">Unselected:</div>
<div class="inp" style="left:729px;top:403px;width:40px;height:26px">3</div>
<div class="cb" style="left:235px;top:439px"><svg><use href="#c"/></svg></div><div class="t" style="left:254px;top:439px">Automatically color any recording pass that adds new takes to existing media items</div>
<div class="cb" style="left:235px;top:465px"><svg><use href="#c"/></svg></div><div class="t" style="left:254px;top:465px">Automatically color any media items that share pooled MIDI events</div>
<div class="t" style="left:235px;top:491px">Set custom track colors from the Track menu, custom item and take colors from the Item menu.</div>

<div class="btn" style="left:622px;top:534px;width:72px;height:26px;border:2px solid #3aa3dc;border-radius:3px;background:linear-gradient(#e2ecf6 0,#c9daec 75%,#d6d0cb 76%);line-height:22px">OK</div>
<div class="btn" style="left:702px;top:534px;width:72px;height:26px">Cancel</div>
<div class="btn" style="left:782px;top:534px;width:72px;height:26px;background:#f3f3f3;border-color:#adb2b5;color:#8a8a8a;box-shadow:none">Apply</div>
</body></html>
